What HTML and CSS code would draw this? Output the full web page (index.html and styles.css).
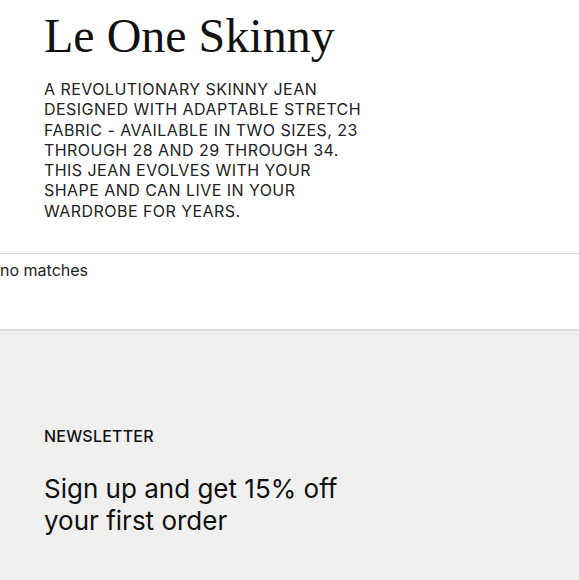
FILE: index.html
```html
<!DOCTYPE html>
<html>
<head>
<meta charset="utf-8">
<link rel="stylesheet" href="styles.css">
</head>
<body>
<section class="product">
  <h1 class="title">Le One Skinny</h1>
  <p class="desc">A revolutionary skinny jean designed with adaptable stretch fabric - available in two sizes, 23 through 28 and 29 through 34. This jean evolves with your shape and can live in your wardrobe for years.</p>
</section>
<section class="results">
  <p class="empty">no matches</p>
</section>
<footer class="newsletter">
  <h2 class="nl-label">NEWSLETTER</h2>
  <p class="nl-pitch">Sign up and get 15% off your first order</p>
</footer>
</body>
</html>
```
FILE: styles.css
```css
html, body {
  margin: 0;
  padding: 0;
  background: #fff;
  color: #111;
  font-family: "Inter", "Liberation Sans", sans-serif;
}
.product {
  padding: 6px 44px 32px;
  border-bottom: 1px solid #dcdcdc;
}
.title {
  margin: 0;
  font-family: "Liberation Serif", serif;
  font-weight: 400;
  font-size: 48px;
  line-height: 60px;
  color: #111;
}
.desc {
  margin: 13px 0 0;
  width: 322px;
  font-size: 16px;
  line-height: 20.3px;
  letter-spacing: 0.45px;
  text-transform: uppercase;
  color: #222;
}
.results {
  height: 75px;
  border-bottom: 2px solid #dedede;
}
.empty {
  margin: 0;
  padding-top: 6px;
  font-size: 16px;
  line-height: 20px;
  color: #222;
}
.newsletter {
  background: #f0f0ef;
  padding: 95px 44px 40px;
  min-height: 200px;
}
.nl-label {
  margin: 0;
  font-size: 16px;
  font-weight: 500;
  line-height: 20px;
  letter-spacing: 0.2px;
  color: #111;
}
.nl-pitch {
  margin: 27px 0 0;
  width: 320px;
  font-size: 26px;
  line-height: 32px;
  color: #111;
}
```
